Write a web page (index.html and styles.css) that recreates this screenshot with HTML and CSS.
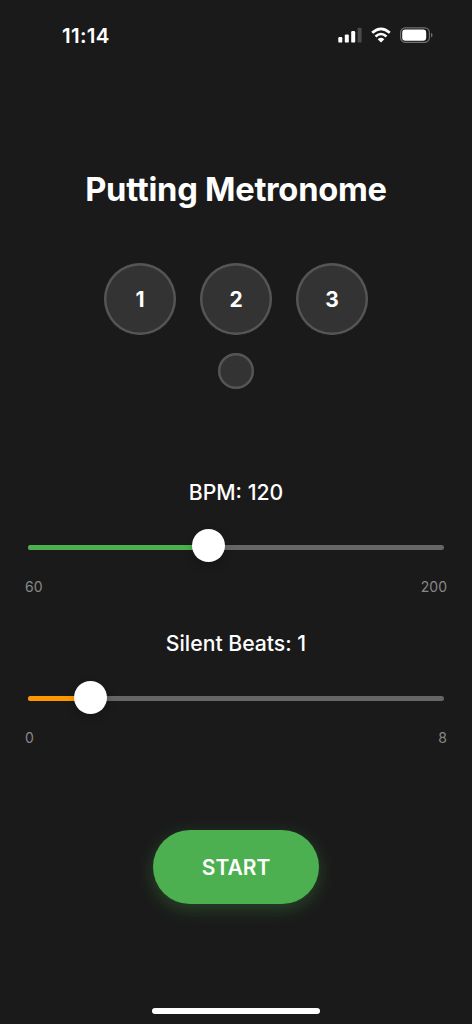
FILE: index.html
```html
<!DOCTYPE html>
<html lang="en">
<head>
    <meta charset="UTF-8">
    <meta name="viewport" content="width=device-width, initial-scale=1.0">
    <title>Putting Metronome</title>
    <link rel="stylesheet" href="styles.css">
</head>
<body>
<header class="status-bar">
    <span class="time">11:14</span>
    <div class="status-icons">
        <svg class="signal" width="24" height="16" viewBox="0 0 24 16">
            <rect x="0.3" y="10" width="4" height="5.6" rx="1.2" fill="#fff"/>
            <rect x="6.8" y="7.4" width="4" height="8.2" rx="1.2" fill="#fff"/>
            <rect x="13.2" y="4" width="4" height="11.6" rx="1.2" fill="#fff"/>
            <rect x="19.6" y="0.8" width="4" height="14.8" rx="1.2" fill="#4a4a4a"/>
        </svg>
        <svg class="wifi" width="20" height="16" viewBox="0 0 20 16">
            <path d="M1.2 5.8Q10 -2 18.8 5.8" fill="none" stroke="#fff" stroke-width="2.7"/>
            <path d="M4.5 9.4Q10 4.6 15.5 9.4" fill="none" stroke="#fff" stroke-width="2.6"/>
            <path d="M6.7 12.2Q10 9.3 13.3 12.2L10 15.6Z" fill="#fff"/>
        </svg>
        <svg class="battery" width="33" height="16" viewBox="0 0 33 16">
            <rect x="0.6" y="0.9" width="28.8" height="14.4" rx="4.7" fill="none" stroke="#707070" stroke-width="1.2"/>
            <rect x="2.2" y="2.5" width="24" height="11.2" rx="3.2" fill="#fff"/>
            <path d="M31 5.7Q32.6 6.4 32.6 8.1T31 10.5Z" fill="#707070"/>
        </svg>
    </div>
</header>

<main class="app">
    <h1>Putting Metronome</h1>

    <div class="beats">
        <div class="beat">1</div>
        <div class="beat">2</div>
        <div class="beat">3</div>
    </div>
    <div class="silent-beats">
        <div class="silent-beat"></div>
    </div>

    <section class="control bpm">
        <div class="control-label">BPM: 120</div>
        <div class="slider">
            <div class="fill" style="width: 43.3%"></div>
            <div class="thumb" style="left: 43.3%"></div>
        </div>
        <div class="range"><span>60</span><span>200</span></div>
    </section>

    <section class="control silent">
        <div class="control-label">Silent Beats: 1</div>
        <div class="slider">
            <div class="fill" style="width: 15%"></div>
            <div class="thumb" style="left: 15%"></div>
        </div>
        <div class="range"><span>0</span><span>8</span></div>
    </section>

    <button class="start">START</button>
</main>

<div class="home-indicator"></div>
</body>
</html>
```
FILE: styles.css
```css
* {
    box-sizing: border-box;
}

body {
    display: flex;
    flex-direction: column;
    height: 1024px;
    margin: 0;
    overflow: hidden;
    background-color: #1a1a1a;
    color: #fff;
    font-family: Inter, "Liberation Sans", sans-serif;
}

/* Status bar */
.status-bar {
    display: flex;
    justify-content: space-between;
    align-items: center;
    height: 70px;
    padding: 0 39px 0 62px;
}

.time {
    padding-top: 2px;
    font-size: 20.5px;
    font-weight: 600;
    letter-spacing: 0.3px;
    line-height: 24px;
}

.status-icons {
    display: flex;
    align-items: center;
}

.wifi {
    margin: 0 9px;
}

/* Main screen */
.app {
    display: flex;
    flex-direction: column;
    align-items: center;
    flex: 1;
}

h1 {
    margin: 99px 0 54px;
    font-size: 32.7px;
    font-weight: 700;
    line-height: 40px;
    letter-spacing: -0.26px;
    white-space: nowrap;
}

.beats {
    display: flex;
    gap: 24px;
}

.beat {
    display: flex;
    justify-content: center;
    align-items: center;
    width: 72px;
    height: 72px;
    border-radius: 50%;
    background-color: #333;
    box-shadow: inset 0 0 0 2.4px #555;
    font-size: 21px;
    font-weight: 700;
}

.silent-beats {
    margin-top: 18px;
}

.silent-beat {
    width: 36px;
    height: 36px;
    border-radius: 50%;
    background-color: #333;
    box-shadow: inset 0 0 0 2.4px #555;
}

/* Sliders */
.control {
    width: 100%;
    height: 151px;
    padding: 0 25px;
}

.bpm {
    margin-top: 89px;
}

.control-label {
    height: 28px;
    font-size: 21.2px;
    font-weight: 500;
    line-height: 28px;
    text-align: center;
}

.slider {
    position: relative;
    height: 5px;
    margin: 39px 3px 29px;
    border-radius: 3px;
    background-color: #666;
}

.fill {
    height: 5px;
    border-radius: 3px;
    background-color: #4caf50;
}

.silent .fill {
    background-color: #ff9800;
}

.thumb {
    position: absolute;
    top: -16px;
    width: 33px;
    height: 33px;
    margin-left: -16px;
    border-radius: 50%;
    background-color: #fff;
    box-shadow: 0 4px 10px rgba(0, 0, 0, 0.2);
}

.silent .thumb {
    top: -15px;
}

.range {
    display: flex;
    justify-content: space-between;
    color: #888;
    font-size: 14px;
    line-height: 16px;
}

.start {
    width: 166px;
    height: 74px;
    margin-top: 50px;
    border: none;
    border-radius: 37px;
    background-color: #4caf50;
    box-shadow: 0 5px 18px rgba(76, 175, 80, 0.3);
    color: #fff;
    font-family: inherit;
    font-size: 21px;
    font-weight: 600;
}

.home-indicator {
    width: 168px;
    height: 6px;
    margin: 0 auto 10px;
    border-radius: 3px;
    background-color: #fff;
}
```
